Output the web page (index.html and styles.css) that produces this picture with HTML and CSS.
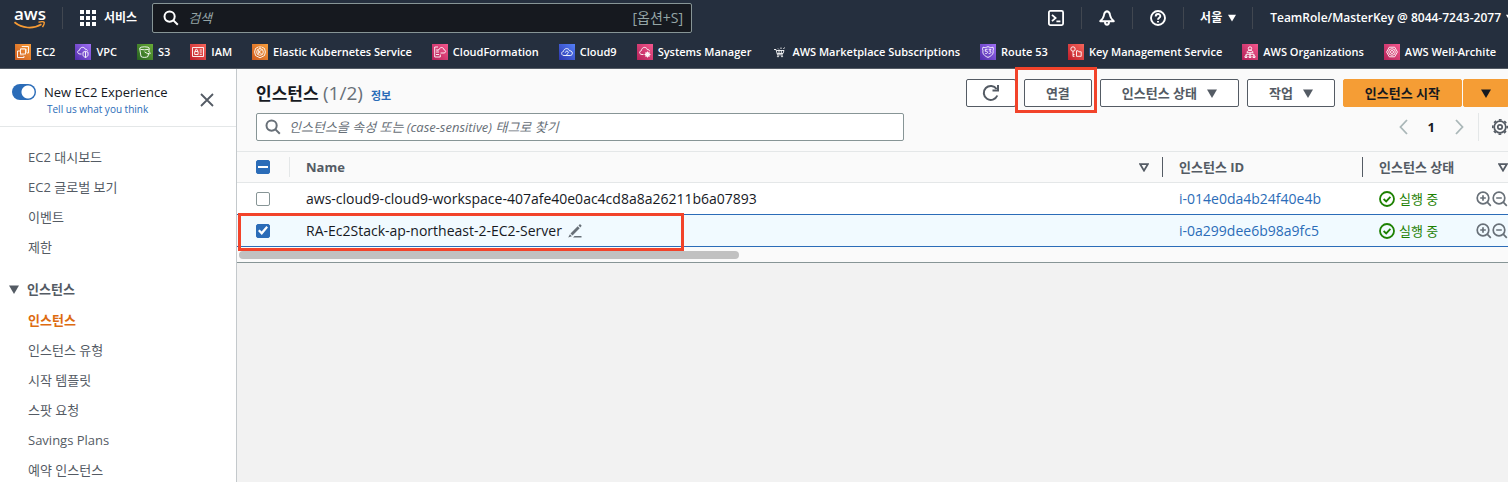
FILE: index.html
```html
<!DOCTYPE html>
<html lang="ko">
<head>
<meta charset="utf-8">
<title>인스턴스 | EC2</title>
<link rel="stylesheet" href="styles.css">
</head>
<body>
<svg class="defs" aria-hidden="true">
  <defs>
    <linearGradient id="g-orange" x1="0" y1="1" x2="1" y2="0"><stop offset="0" stop-color="#cc5a1e"/><stop offset="1" stop-color="#f79d3c"/></linearGradient>
    <linearGradient id="g-purple" x1="0" y1="1" x2="1" y2="0"><stop offset="0" stop-color="#4f2bab"/><stop offset="1" stop-color="#a070f4"/></linearGradient>
    <linearGradient id="g-green" x1="0" y1="1" x2="1" y2="0"><stop offset="0" stop-color="#256021"/><stop offset="1" stop-color="#69ac37"/></linearGradient>
    <linearGradient id="g-red" x1="0" y1="1" x2="1" y2="0"><stop offset="0" stop-color="#bf1d2a"/><stop offset="1" stop-color="#f5655a"/></linearGradient>
    <linearGradient id="g-pink" x1="0" y1="1" x2="1" y2="0"><stop offset="0" stop-color="#b42158"/><stop offset="1" stop-color="#f4588e"/></linearGradient>
    <linearGradient id="g-blue" x1="0" y1="1" x2="1" y2="0"><stop offset="0" stop-color="#2c35ad"/><stop offset="1" stop-color="#5480f7"/></linearGradient>
    <symbol id="caret" viewBox="0 0 10 9"><path d="M0 0.5h10L5 9z" fill="currentColor"/></symbol>
    <symbol id="sort" viewBox="0 0 10 9"><path d="M1.2 1.2h7.6L5 7.6z" fill="none" stroke="currentColor" stroke-width="1.8"/></symbol>
    <symbol id="search" viewBox="0 0 16 16"><g fill="none" stroke="currentColor" stroke-width="2"><circle cx="6.6" cy="6.6" r="5.1"/><path d="M10.4 10.4l4.4 4.4"/></g></symbol>
    <symbol id="ok" viewBox="0 0 16 16"><g fill="none" stroke="currentColor" stroke-width="1.8"><circle cx="8" cy="8" r="7"/><path d="M4.6 8l2.6 2.4 4.2-4.6"/></g></symbol>
    <symbol id="zoom-in" viewBox="0 0 16 16"><g fill="none" stroke="currentColor" stroke-width="1.7"><circle cx="7" cy="7" r="5.8"/><path d="M11.2 11.2l3.6 3.6M4.2 7h5.6M7 4.2v5.6"/></g></symbol>
    <symbol id="zoom-out" viewBox="0 0 16 16"><g fill="none" stroke="currentColor" stroke-width="1.7"><circle cx="7" cy="7" r="5.8"/><path d="M11.2 11.2l3.6 3.6M4.2 7h5.6"/></g></symbol>
  </defs>
</svg>

<header class="top">
  <div class="bar">
    <a class="logo" href="#" aria-label="aws">
      <span class="logo-word">aws</span>
      <svg class="logo-smile" viewBox="0 0 32 8"><g fill="none" stroke="#f79b34" stroke-width="1.7"><path d="M0.5 1.2C8 7.4 19 8.4 27.500 3.200"/><path d="M24.500 1.200c2.600-.6 4.800-.8 5.600 0 .6 1-.4 3-1.600 4.900" stroke-width="1.4"/></g></svg>
    </a>
    <button class="services" type="button">
      <svg class="i16" viewBox="0 0 16 16" fill="#fff"><path d="M0 0h4v4H0zM6 0h4v4H6zM12 0h4v4h-4zM0 6h4v4H0zM6 6h4v4H6zM12 6h4v4h-4zM0 12h4v4H0zM6 12h4v4H6zM12 12h4v4h-4z"/></svg>
      <span>서비스</span>
    </button>
    <label class="global-search">
      <svg class="i16"><use href="#search"/></svg>
      <input type="search" placeholder="검색" aria-label="검색">
      <span class="shortcut">[옵션+S]</span>
    </label>
    <div class="tools">
      <button type="button" aria-label="CloudShell"><svg class="i16" viewBox="0 0 16 16" fill="none" stroke="#fff" stroke-width="1.8"><rect x="0.900" y="0.900" width="14.200" height="14.200" rx="1.500"/><path d="M4 4.800l3.600 3.200L4 11.200M8.400 11.400h4"/></svg></button>
      <button type="button" aria-label="알림"><svg class="i16" viewBox="0 0 16 16" fill="none" stroke="#fff" stroke-width="1.900" stroke-linejoin="round"><path d="M8 1.200C6.200 1.500 5.200 3 5 5 4.800 7.500 3.600 8.900 1.200 11.200h13.600C12.400 8.900 11.200 7.500 11 5 10.800 3 9.800 1.500 8 1.200z"/><path d="M6 12c0 3.700 4 3.700 4 0"/></svg></button>
      <button type="button" aria-label="도움말"><svg class="i16" viewBox="0 0 16 16" fill="none" stroke="#fff" stroke-width="1.900"><circle cx="8" cy="8" r="7"/><path d="M5.700 6.500C5.700 3.200 10.400 3.400 10.300 6.200 10.200 7.800 8 7.600 8 9.800"/><path d="M8 10.900v1.700"/></svg></button>
      <button type="button" class="region">서울 <svg class="caret-s"><use href="#caret"/></svg></button>
      <button type="button" class="account">TeamRole/MasterKey @ 8044-7243-2077 <svg class="caret-s"><use href="#caret"/></svg></button>
    </div>
  </div>
  <nav class="favs" aria-label="즐겨찾기">
    <a href="#"><svg class="i16" viewBox="0 0 16 16"><path fill="url(#g-orange)" d="M0 0h16v16H0z"/><g fill="none" stroke="#fff" stroke-width=".9"><rect x="5.500" y="5" width="5" height="5"/><path d="M7 3V2.500h6.500V9H12M5 7H2.500v6.500H9V12M6 10.500v1M8 10.500v1M11 6h1M11 8h1M7 4.800V4M9 4.800V4"/></g></svg>EC2</a>
    <a href="#"><svg class="i16" viewBox="0 0 16 16"><path fill="url(#g-purple)" d="M0 0h16v16H0z"/><g fill="none" stroke="#fff" stroke-width=".9"><path d="M6.500 10H5C2 10 2 6.500 4.500 6.300 5 2.500 9.500 2.500 10.200 5.200c1.500 0 2 .6 2.300 1.500"/><path d="M8 8.300l2.500-1 2.500 1v2.500c0 1.600-1.500 2.200-2.500 2.700-1-.5-2.500-1.100-2.500-2.700zM10.500 7.500v6"/></g></svg>VPC</a>
    <a href="#"><svg class="i16" viewBox="0 0 16 16"><path fill="url(#g-green)" d="M0 0h16v16H0z"/><g fill="none" stroke="#fff" stroke-width=".9"><ellipse cx="7.500" cy="4.300" rx="4.800" ry="1.500"/><path d="M2.700 4.500L4 12.500c1.500 1.200 5.500 1.200 7 0l.6-3.500M12.300 4.500l-.5 3.300M7.500 7.800c2 1.500 5 2.700 5.800 1.700.3-.8-1-1.500-1.700-2"/></g></svg>S3</a>
    <a href="#"><svg class="i16" viewBox="0 0 16 16"><path fill="url(#g-red)" d="M0 0h16v16H0z"/><g fill="none" stroke="#fff" stroke-width=".9"><path d="M2.500 3.500h11v9h-11zM4.700 7.500h3.400v3H4.700zM5.400 7.300V6c0-1 2-1 2 0v1.300M9.800 6h2M9.800 8h2M9.800 10.300h2"/></g></svg>IAM</a>
    <a href="#"><svg class="i16" viewBox="0 0 16 16"><path fill="url(#g-orange)" d="M0 0h16v16H0z"/><g fill="none" stroke="#fff" stroke-width=".9"><path d="M6.500 2.800L3.500 4.500 2.600 8l.9 3.500 4.500 2.300 4.500-2.300.9-3.500-.9-3.500-3-1.700M8 2v3"/><circle cx="8" cy="8" r="3.300"/><path d="M6.700 6v4M9.700 6L7 8l2.700 2"/></g></svg>Elastic Kubernetes Service</a>
    <a href="#"><svg class="i16" viewBox="0 0 16 16"><path fill="url(#g-pink)" d="M0 0h16v16H0z"/><g fill="none" stroke="#fff" stroke-width=".9"><path d="M6 3H2.700v10h5.600v-2.500M4 6h2M4 8h3M4 10.500h3M8.500 9H12c2.300-.2 2-3 .2-3C11.500 2.800 8 2.800 7.300 5.300 6 5.300 5.700 6.500 6.300 7"/></g></svg>CloudFormation</a>
    <a href="#"><svg class="i16" viewBox="0 0 16 16"><path fill="url(#g-blue)" d="M0 0h16v16H0z"/><g fill="none" stroke="#fff" stroke-width=".9"><path d="M5 11.500c-3 0-3-3.800-.6-4C5 4 9.500 3.500 10.500 6.700c3.700-.2 3.700 4.800.7 4.800zM6.300 8.700c0-2 3.200-2 3 0-.2 1-1.500.7-1.500 2.300"/></g></svg>Cloud9</a>
    <a href="#"><svg class="i16" viewBox="0 0 16 16"><path fill="url(#g-pink)" d="M0 0h16v16H0z"/><g fill="none" stroke="#fff" stroke-width=".9"><path d="M6.500 10.500H5c-3 0-3-3.500-.7-3.800C5 2.500 9.500 2.500 10.300 5.500c1.700 0 2.200.8 2.200 1.700"/><circle cx="10.500" cy="10.500" r="2"/><path d="M10.500 7.500v6M7.500 10.500h6M8.500 8.500l4 4M12.500 8.500l-4 4"/></g></svg>Systems Manager</a>
    <a href="#"><svg class="i16" viewBox="0 0 16 16"><g fill="none" stroke="#fff" stroke-width=".9"><path d="M3 5.500h2l1.500 5.300h5.300M5.500 6.500h7.500l-1 3H6.300M8 6.500v3M10.300 6.500v3M12.500 5l1-1.500M7 4.500l1 1M10 3.500v1.500"/><circle cx="7" cy="12.300" r=".6"/><circle cx="11" cy="12.300" r=".6"/></g></svg>AWS Marketplace Subscriptions</a>
    <a href="#"><svg class="i16" viewBox="0 0 16 16"><path fill="url(#g-purple)" d="M0 0h16v16H0z"/><g fill="none" stroke="#fff" stroke-width=".9"><path d="M3 3.200c1.500.6 3.300.4 5-.6 1.700 1 3.500 1.200 5 .6.600 1.300.500 2.500 0 3.500.8 3-1.500 5.300-5 6.700-3.500-1.400-5.800-3.700-5-6.700-.5-1-.6-2.200 0-3.500z"/><path d="M7.500 5.300H5.300v2h1.200c1.700 0 1.300 2.700-1.200 2.200M8.700 5.300h2.300L9.600 7.200c2 0 1.800 2.800-.9 2.300"/></g></svg>Route 53</a>
    <a href="#"><svg class="i16" viewBox="0 0 16 16"><path fill="url(#g-red)" d="M0 0h16v16H0z"/><g fill="none" stroke="#fff" stroke-width=".9"><circle cx="5" cy="5" r="2.200"/><path d="M5 7.200v5.300M5 10.500h1.500M5 12.300h1.500M8.500 12.300V6.800h1.700l.7 1h2.300v4.500z"/></g></svg>Key Management Service</a>
    <a href="#"><svg class="i16" viewBox="0 0 16 16"><path fill="url(#g-pink)" d="M0 0h16v16H0z"/><g fill="none" stroke="#fff" stroke-width=".9"><circle cx="8" cy="4.500" r="1.700"/><path d="M5 8.700c0-3.200 6-3.200 6 0zM8 8.700v3M4 12V10.300h8V12M3 12h2v1.500H3zM7 12h2v1.500H7zM11 12h2v1.500h-2z"/></g></svg>AWS Organizations</a>
    <a href="#"><svg class="i16" viewBox="0 0 16 16"><path fill="url(#g-pink)" d="M0 0h16v16H0z"/><g fill="none" stroke="#fff" stroke-width=".9"><path d="M5.300 3.200h5.400L13.400 8l-2.700 4.800H5.300L2.600 8z"/><circle cx="8" cy="8" r="3.300"/><circle cx="8" cy="8" r="1.500"/></g></svg>AWS Well-Archite</a>
  </nav>
</header>

<div class="page">
  <aside class="side">
    <div class="side-head">
      <div class="experience">
        <label class="toggle"><input type="checkbox" role="switch" checked><span>New EC2 Experience</span></label>
        <a href="#">Tell us what you think</a>
      </div>
      <button class="close" type="button" aria-label="닫기"><svg viewBox="0 0 14 14"><path d="M1 1l12 12M13 1L1 13" stroke="#545b64" stroke-width="1.800"/></svg></button>
    </div>
    <nav class="side-nav">
      <a href="#">EC2 대시보드</a>
      <a href="#">EC2 글로벌 보기</a>
      <a href="#">이벤트</a>
      <a href="#">제한</a>
      <button type="button" class="group"><svg class="caret"><use href="#caret"/></svg>인스턴스</button>
      <a href="#" class="current">인스턴스</a>
      <a href="#">인스턴스 유형</a>
      <a href="#">시작 템플릿</a>
      <a href="#">스팟 요청</a>
      <a href="#">Savings Plans</a>
      <a href="#">예약 인스턴스</a>
    </nav>
  </aside>

  <main class="main">
    <section class="panel">
      <div class="panel-head">
        <div class="title"><h1>인스턴스 <span class="count">(1/2)</span></h1><a href="#">정보</a></div>
        <div class="actions">
          <button type="button" class="btn refresh" aria-label="새로 고침"><svg viewBox="0 0 18 18" fill="none" stroke="#545b64" stroke-width="2"><path d="M15.300 11.500A7 7 0 1 1 14.600 5"/><path d="M16 1v5.500h-5.500"/></svg></button>
          <span class="marked"><button type="button" class="btn">연결</button><span class="mark"></span></span>
          <button type="button" class="btn">인스턴스 상태 <svg class="caret"><use href="#caret"/></svg></button>
          <button type="button" class="btn">작업 <svg class="caret"><use href="#caret"/></svg></button>
          <div class="split">
            <button type="button" class="btn primary">인스턴스 시작</button>
            <button type="button" class="btn primary more" aria-label="더 보기"><svg class="caret"><use href="#caret"/></svg></button>
          </div>
        </div>
      </div>
      <div class="filter-row">
        <label class="filter">
          <svg class="i16"><use href="#search"/></svg>
          <input type="search" placeholder="인스턴스을 속성 또는 (case-sensitive) 태그로 찾기" aria-label="인스턴스 찾기">
        </label>
        <div class="pager">
          <button type="button" aria-label="이전"><svg class="chev" viewBox="0 0 9 16"><path d="M8 1L1.500 8 8 15" fill="none" stroke="#aab7b8" stroke-width="1.800"/></svg></button>
          <span class="page-no">1</span>
          <button type="button" aria-label="다음"><svg class="chev" viewBox="0 0 9 16"><path d="M1 1l6.500 7L1 15" fill="none" stroke="#aab7b8" stroke-width="1.800"/></svg></button>
          <button type="button" class="settings" aria-label="설정"><svg class="i16" viewBox="0 0 16 16" fill="none" stroke="#545b64"><circle cx="8" cy="8" r="2.200" stroke-width="1.700"/><circle cx="8" cy="8" r="5.800" stroke-width="1.700"/><circle cx="8" cy="8" r="7.200" stroke-width="1.600" stroke-dasharray="2.830 2.830" stroke-dashoffset="1.400"/></svg></button>
        </div>
      </div>
      <table class="grid">
        <colgroup><col class="c-check"><col><col class="c-id"><col class="c-state"></colgroup>
        <thead>
          <tr>
            <th><input type="checkbox" class="mixed" aria-label="모두 선택"></th>
            <th><div class="cell">Name <svg class="sort"><use href="#sort"/></svg></div></th>
            <th><div class="cell">인스턴스 ID</div></th>
            <th><div class="cell">인스턴스 상태 <svg class="sort"><use href="#sort"/></svg></div></th>
          </tr>
        </thead>
        <tbody>
          <tr>
            <td><input type="checkbox" aria-label="aws-cloud9 선택"></td>
            <td>aws-cloud9-cloud9-workspace-407afe40e0ac4cd8a8a26211b6a07893</td>
            <td><a href="#">i-014e0da4b24f40e4b</a></td>
            <td><div class="cell"><span class="state"><svg class="i16"><use href="#ok"/></svg>실행 중</span><span class="zooms"><svg class="i16"><use href="#zoom-in"/></svg><svg class="i16"><use href="#zoom-out"/></svg></span></div></td>
          </tr>
          <tr class="selected">
            <td><input type="checkbox" checked aria-label="RA-Ec2Stack 선택"><span class="row-mark"></span></td>
            <td><div class="name">RA-Ec2Stack-ap-northeast-2-EC2-Server<svg class="i16" viewBox="0 0 16 16" fill="#687078"><path d="M10.700 3.300l2 2-7.200 7.200-2-2zM11.500 2.500l1.200-1.300c.6-.4 2.200 1 1.800 1.800l-1.200 1.500zM2.900 11.200l2 2-3.700 1.400zM7.500 13h7v1.600H6z"/></svg></div></td>
            <td><a href="#">i-0a299dee6b98a9fc5</a></td>
            <td><div class="cell"><span class="state"><svg class="i16"><use href="#ok"/></svg>실행 중</span><span class="zooms"><svg class="i16"><use href="#zoom-in"/></svg><svg class="i16"><use href="#zoom-out"/></svg></span></div></td>
          </tr>
        </tbody>
      </table>
      <div class="scroll"><div class="thumb"></div></div>
    </section>
  </main>
</div>
</body>
</html>
```

FILE: styles.css
```css
* { box-sizing: border-box; }
html, body { height: 100%; }
body {
  margin: 0;
  display: flex;
  flex-direction: column;
  overflow: hidden;
  background: #f2f2f2;
  color: #16191f;
  font: 13px/20px "Open Sans", "Noto Sans CJK KR", sans-serif;
}
button, input { font: inherit; color: inherit; margin: 0; }
button { padding: 0; border: 0; background: none; cursor: pointer; }
a { color: #2b6cb8; text-decoration: none; }
svg { display: block; flex: none; }
.defs { position: absolute; width: 0; height: 0; }
.i16 { width: 16px; height: 16px; }
.caret { width: 10px; height: 9px; }
.caret-s { width: 8px; height: 8px; }

/* Global header */
.top {
  flex: none;
  height: 69px;
  background: #252f3e;
  border-bottom: 1px solid #545b64;
  color: #fff;
  overflow: hidden;
}
.bar { display: flex; align-items: center; height: 35px; }
.logo {
  display: flex;
  flex-direction: column;
  align-items: flex-start;
  width: 63px;
  height: 22px;
  padding-left: 14px;
  border-right: 1px solid #414750;
  color: #fff;
}
.logo-word { font-size: 17px; line-height: 14px; font-weight: 600; }
.logo-smile { width: 32px; height: 8px; }
.services { display: flex; align-items: center; gap: 8px; margin-left: 17px; font-size: 12px; font-weight: 700; }
.global-search {
  display: flex;
  align-items: center;
  gap: 9px;
  flex: 0 1 540px;
  height: 30px;
  margin-left: 15px;
  padding: 0 8px 0 10px;
  background: #16191f;
  border: 1px solid #879596;
  border-radius: 2px;
}
.global-search input, .filter input {
  flex: 1;
  min-width: 0;
  padding: 0;
  border: 0;
  outline: 0;
  background: none;
}
.global-search input::placeholder { color: #95a5a6; font-style: italic; opacity: 1; }
.shortcut { color: #95a5a6; font-size: 14px; }
.tools { display: flex; align-items: center; margin-left: auto; margin-right: -6px; font-size: 12px; font-weight: 600; }
.tools button {
  display: flex;
  align-items: center;
  gap: 6px;
  height: 22px;
  padding: 0 17px;
  border-left: 1px solid #414750;
  white-space: nowrap;
}
.tools button:first-child { border-left: 0; }
.tools .region { padding: 0 16px; }
.tools .account { padding-right: 0; gap: 5px; }
.favs { display: flex; align-items: center; gap: 20px; height: 34px; padding-left: 15px; }
.favs a { display: flex; align-items: center; gap: 5px; color: #fff; font-size: 11px; font-weight: 600; white-space: nowrap; }

/* Side navigation */
.page { display: flex; flex: 1; min-height: 0; }
.side { flex: none; width: 237px; background: #fff; border-right: 1px solid #c4c9cc; overflow: hidden; }
.side-head { display: flex; justify-content: space-between; height: 58px; padding: 13px 22px 0 12px; border-bottom: 1px solid #e4e7e8; }
.experience a { display: block; padding-left: 35px; font-size: 10px; line-height: 14px; }
.toggle { display: flex; align-items: center; gap: 8px; }
.toggle input {
  appearance: none;
  width: 24px;
  height: 16px;
  border-radius: 8px;
  background: radial-gradient(circle at 16px 8px, #fff 6px, #2b6cb8 7px);
}
.close { align-self: flex-start; padding-top: 11px; }
.close svg { width: 14px; height: 14px; }
.side-nav { display: flex; flex-direction: column; padding-top: 15px; }
.side-nav a { padding-left: 28px; color: #545b64; line-height: 30px; }
.side-nav .group { display: flex; align-items: center; gap: 8px; margin-top: 12px; padding-left: 9px; color: #545b64; font-weight: 700; line-height: 31px; }
.side-nav .current { color: #dd6b10; font-weight: 700; }

/* Instances panel */
.main { flex: 1; min-width: 0; }
.panel { background: #fafafa; border-bottom: 1px solid #879596; }
.panel-head { display: flex; justify-content: space-between; padding: 10px 0 0 19px; }
.title { display: flex; align-items: baseline; gap: 8px; line-height: 28px; }
.title h1 { margin: 0; font-size: 17px; font-weight: 700; }
.title a { font-size: 11px; font-weight: 700; }
.count { color: #687078; font-size: 19px; font-weight: 400; }
.actions { display: flex; gap: 8px; margin-right: -1px; }
.btn {
  display: flex;
  align-items: center;
  justify-content: center;
  gap: 10px;
  height: 28px;
  padding: 0 21px;
  background: #fff;
  border: 1px solid #545b64;
  border-radius: 2px;
  color: #545b64;
  font-weight: 700;
  white-space: nowrap;
}
.refresh { width: 50px; padding: 0; }
.refresh svg { width: 18px; height: 18px; }
.marked { position: relative; }
.mark { position: absolute; inset: -12px -5px -6px -9px; border: 3px solid #f2432a; pointer-events: none; }
.split { display: flex; gap: 1px; }
.btn.primary { background: #f59d35; border-color: #f59d35; color: #16191f; }
.btn.more { width: 46px; }
.filter-row { display: flex; align-items: center; justify-content: space-between; padding: 6px 0 10px 19px; }
.filter {
  display: flex;
  align-items: center;
  gap: 8px;
  flex: 0 1 648px;
  height: 28px;
  padding: 0 8px;
  background: #fff;
  border: 1px solid #879596;
  border-radius: 2px;
  color: #687078;
}
.filter input::placeholder { color: #687078; font-style: italic; opacity: 1; }
.pager { display: flex; align-items: center; gap: 14px; }
.chev { width: 9px; height: 16px; }
.page-no { padding: 0 6px; font-weight: 700; }
.pager .settings { height: 28px; padding-left: 13px; border-left: 1px solid #e4e7e8; }
.panel-head { height: 38px; }

/* Table */
.grid { width: 100%; table-layout: fixed; border-collapse: collapse; border-top: 1px solid #e4e7e8; font-size: 14px; }
.c-check { width: 53px; }
.c-id { width: 200px; }
.c-state { width: 145px; }
.grid th { height: 31px; padding: 0 0 0 16px; border-bottom: 1px solid #e4e7e8; color: #545b64; font-size: 13px; font-weight: 700; text-align: left; }
.grid td { position: relative; height: 32px; padding: 0 0 0 16px; background: #fff; white-space: nowrap; }
.grid th:first-child, .grid td:first-child { padding-left: 19px; }
.grid th .cell { position: relative; }
.grid th .cell::before { content: ""; position: absolute; left: -17px; width: 1px; height: 20px; background: #545b64; }
.grid th:nth-child(2) .cell::before { background: #e4e7e8; }
.cell { display: flex; align-items: center; justify-content: space-between; }
.sort { width: 10px; height: 9px; margin-right: 14px; }
.grid th:last-child .sort { margin-right: 0; }
.grid input {
  appearance: none;
  display: block;
  width: 14px;
  height: 14px;
  background: #fff;
  border: 1px solid #879596;
  border-radius: 2px;
}
.grid input.mixed { background: linear-gradient(#fff, #fff) center / 10px 2px no-repeat #2b6cb8; border-color: #2b6cb8; }
.grid input:checked { display: grid; place-items: center; background: #2b6cb8; border-color: #2b6cb8; }
.grid input:checked::before { content: ""; width: 10px; height: 9px; background: #fff; clip-path: polygon(0 55%, 16% 38%, 36% 62%, 84% 0, 100% 16%, 38% 100%); }
.selected td { background: #f1faff; border-top: 1px solid #2b6cb8; border-bottom: 1px solid #2b6cb8; }
.name { display: flex; align-items: center; gap: 5px; }
.row-mark { position: absolute; z-index: 1; left: 1px; top: -2px; width: 446px; height: 38px; border: 3px solid #f2432a; pointer-events: none; }
.state { display: flex; align-items: center; gap: 4px; color: #1d8102; font-size: 13px; }
.zooms { display: flex; color: #687078; }
.scroll { height: 15px; padding: 4px 2px 0; }
.thumb { width: 500px; height: 8px; border-radius: 4px; background: #c1c1c1; }
```
